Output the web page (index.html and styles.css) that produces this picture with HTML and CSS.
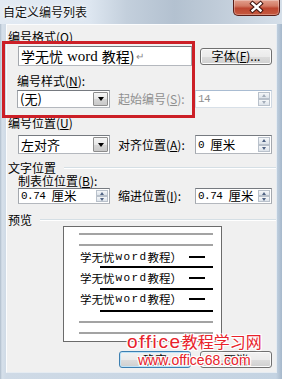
FILE: index.html
```html
<!DOCTYPE html>
<html lang="zh-CN">
	<head>
		<meta charset="utf-8">
		<link rel="stylesheet" href="styles.css">
	</head>

	<body>
		<div class="window">
			<div class="titlebar">
				<span class="title">自定义编号列表</span>
				<div class="close">
					<svg width="45" height="15" viewBox="0 0 45 15">
						<path d="M18.5 3.5 L26.5 10.5 M26.5 3.5 L18.5 10.5" stroke="#3b110c" stroke-width="4.4" stroke-linecap="square" fill="none"/>
						<path d="M18.5 3.5 L26.5 10.5 M26.5 3.5 L18.5 10.5" stroke="#fff" stroke-width="2.4" stroke-linecap="square" fill="none"/>
					</svg>
				</div>
			</div>

			<div class="client">
				<div class="lbl l-fmt">编号格式(<u>O</u>)</div>
				<div class="row row-fmt">
					<div class="box fmt">学无忧<span class="serif">word</span>教程)<span class="ret">↵</span></div>
					<div class="btn btn-font">字体(<u>F</u>)...</div>
				</div>

				<div class="lbl l-style">编号样式(<u>N</u>):</div>
				<div class="row row-style">
					<div class="box combo c-style">(无)<span class="drop"></span></div>
					<span class="lbl side dim">起始编号(<u>S</u>):</span>
					<div class="box spin disabled"><span class="num">14</span><span class="arrows"><i class="up"></i><i class="down"></i></span></div>
				</div>

				<div class="lbl l-pos">编号位置(<u>U</u>)</div>
				<div class="row row-pos">
					<div class="box combo c-pos">左对齐<span class="drop"></span></div>
					<span class="lbl side">对齐位置(<u>A</u>):</span>
					<div class="box spin"><span class="num">0 </span>厘米<span class="arrows"><i class="up"></i><i class="down"></i></span></div>
				</div>

				<div class="lbl sep l-text">文字位置</div>
				<div class="lbl l-tab">制表位位置(<u>B</u>):</div>
				<div class="row row-text">
					<div class="box spin s-tab"><span class="num">0.74 </span>厘米<span class="arrows"><i class="up"></i><i class="down"></i></span></div>
					<span class="lbl side">缩进位置(<u>I</u>):</span>
					<div class="box spin"><span class="num">0.74 </span>厘米<span class="arrows"><i class="up"></i><i class="down"></i></span></div>
				</div>

				<div class="lbl sep l-prev">预览</div>
				<div class="preview">
					<div class="pv-gray g1"></div>
					<div class="pv-gray g2"></div>
					<div class="pv-text t1">学无忧<span class="mono">word</span>教程）<span class="dash"></span></div>
					<div class="pv-black b1"></div>
					<div class="pv-text t2">学无忧<span class="mono">word</span>教程）<span class="dash"></span></div>
					<div class="pv-black b2"></div>
					<div class="pv-text t3">学无忧<span class="mono">word</span>教程）<span class="dash"></span></div>
					<div class="pv-black b3"></div>
					<div class="pv-gray g3"></div>
					<div class="pv-gray g4"></div>
				</div>

				<div class="buttons">
					<div class="btn btn-ok">确定</div>
					<div class="btn btn-cancel">取消</div>
				</div>
			</div>

			<!-- red annotation frame drawn over the dialog -->
			<div class="highlight"></div>

			<div class="watermark">
				<div class="wm1"><span class="lat">office</span>教程学习网</div>
				<div class="wm2">www.office68.com</div>
			</div>
		</div>
	</body>
</html>
```

FILE: styles.css
```css
* {
	box-sizing: border-box;
}
html, body {
	margin: 0;
}
body {
	width: 282px;
	height: 379px;
	overflow: hidden;
	font-family: "Noto Sans CJK SC", sans-serif;
	font-size: 12px;
	line-height: 12px;
	color: #000;
	background: #c9d7e6;
}
.window {
	position: relative;
	width: 282px;
	height: 379px;
	background: linear-gradient(90deg, #aebccb 0, #d6e0ea 2px, #cfdae6 6px, #c4d3e2 276px, #a6b8cb 282px);
}
.titlebar {
	height: 24px;
	display: flex;
	align-items: flex-start;
	background: linear-gradient(90deg, #e2eaf3 0%, #dde6f0 32%, #c3cfdc 45%, #b3c1d0 62%, #bfcbd8 76%, #d5dfe9 100%);
}
.title {
	padding: 6px 0 0 3px;
	color: #111;
	text-shadow: 0 0 6px #fff, 0 0 3px #fff;
}
.close {
	margin-left: auto;
	margin-right: 2px;
	width: 47px;
	height: 16px;
	border: 1px solid #5a1e18;
	border-top: none;
	border-radius: 0 0 5px 5px;
	background: linear-gradient(#e2a08e, #d27a64 40%, #bd4630 55%, #c65a40);
	box-shadow: inset 0 0 0 1px rgba(255, 255, 255, .3);
}
.close svg {
	display: block;
}
.client {
	margin: 0 5px 0 6px;
	height: 349px;
	background: #f0f0f0;
	border: 1px solid;
	border-color: #fbfcfd #e6ecf2 #e6ecf2 #fbfcfd;
}
.lbl {
	height: 12px;
	line-height: 12px;
	padding-left: 1px;
	white-space: nowrap;
}
.l-fmt {
	margin-top: 6px;
}
.l-style {
	margin-top: 9px;
	padding-left: 10px;
}
.l-pos {
	margin-top: 9px;
}
.l-text {
	margin-top: 8px;
}
.l-tab {
	margin-top: 1px;
	padding-left: 11px;
}
.l-prev {
	margin-top: 10px;
}
.sep {
	display: flex;
	align-items: center;
}
.sep::after {
	content: "";
	flex: 1;
	margin-left: 8px;
	border-top: 1px solid #d5dfe5;
	border-bottom: 1px solid #fff;
}
.row {
	display: flex;
	align-items: center;
}
.row-fmt {
	margin-top: 3px;
	height: 20px;
}
.row-style {
	margin-top: 3px;
	height: 18px;
}
.row-pos {
	margin-top: 6px;
	height: 19px;
}
.row-text {
	margin-top: 1px;
	height: 16px;
}
.box {
	height: 100%;
	display: flex;
	align-items: center;
	background: #fff;
	border: 1px solid;
	border-color: #767a80 #a4a8ae #b4b8be #a4a8ae;
	white-space: nowrap;
}
.fmt {
	margin-left: 11px;
	width: 174px;
	padding-left: 2px;
	font-size: 14px;
}
.serif {
	font-family: "Liberation Serif", serif;
	font-size: 15px;
	margin: 0 4px;
}
.ret {
	font-size: 10px;
	color: #8a8a8a;
	margin-left: 1px;
}
.combo {
	padding-left: 2px;
	font-size: 13px;
}
.c-style {
	margin-left: 10px;
	width: 93px;
}
.c-pos {
	margin-left: 11px;
	width: 92px;
}
.drop {
	align-self: stretch;
	width: 15px;
	margin: 1px 1px 1px auto;
	border: 1px solid #8d8d8d;
	border-radius: 1px;
	background: linear-gradient(#f6f6f6, #e6e6e6 50%, #d6d6d6 51%, #c9c9c9);
	display: flex;
	align-items: center;
	justify-content: center;
}
.drop::before {
	content: "";
	border-left: 3.5px solid transparent;
	border-right: 3.5px solid transparent;
	border-top: 4px solid #000;
}
.side {
	width: 85px;
	padding-left: 8px;
}
.dim {
	color: #8f8f8f;
}
.spin {
	width: 77px;
	padding-left: 2px;
	font-size: 12.5px;
}
.s-tab {
	margin-left: 11px;
	width: 92px;
}
.num {
	font-family: "Liberation Mono", monospace;
	font-size: 11px;
	letter-spacing: -0.5px;
	white-space: pre;
}
.disabled {
	border-color: #a9bcd2 #cfd8e2 #d8e0e8 #cfd8e2;
	color: #8f8f8f;
}
.arrows {
	align-self: stretch;
	width: 12px;
	margin: 1px 1px 1px auto;
	display: flex;
	flex-direction: column;
}
.arrows i {
	flex: 1;
	display: flex;
	align-items: center;
	justify-content: center;
	border: 1px solid #b9c1cb;
	background: linear-gradient(#f5f7f9, #dde3ea);
}
.arrows .up::before {
	content: "";
	border-left: 2.5px solid transparent;
	border-right: 2.5px solid transparent;
	border-bottom: 3px solid #4f6283;
}
.arrows .down::before {
	content: "";
	border-left: 2.5px solid transparent;
	border-right: 2.5px solid transparent;
	border-top: 3px solid #4f6283;
}
.disabled .arrows .up::before {
	border-bottom-color: #a3adba;
}
.disabled .arrows .down::before {
	border-top-color: #a3adba;
}
.btn {
	height: 17px;
	display: flex;
	align-items: center;
	justify-content: center;
	border: 1px solid #707070;
	border-radius: 3px;
	background: linear-gradient(#f2f2f2, #ebebeb 50%, #dddddd 51%, #cfcfcf);
	box-shadow: inset 0 0 0 1px #fbfbfb;
	white-space: nowrap;
}
.btn-font {
	margin-left: 8px;
	width: 72px;
}
.preview {
	margin-left: 56px;
	width: 159px;
	height: 116px;
	padding-left: 15px;
	background: #fff;
	border: 1px solid #6b6b6b;
}
.pv-gray {
	width: 134px;
	height: 2px;
	background: #a3a3a3;
}
.pv-black {
	margin-left: 21px;
	width: 113px;
	height: 2px;
	background: #000;
}
.pv-text {
	height: 12px;
	display: flex;
	align-items: center;
	margin-left: 1px;
	font-size: 11.5px;
	white-space: nowrap;
}
.mono {
	font-family: "Liberation Mono", monospace;
	font-size: 11px;
	letter-spacing: 1.4px;
	margin-left: 1px;
}
.dash {
	width: 16px;
	height: 2px;
	margin-left: 7px;
	background: #000;
}
.g1 { margin-top: 6px; }
.g2 { margin-top: 9px; }
.t1 { margin-top: 5px; }
.b1 { margin-top: 3px; }
.t2 { margin-top: 4px; }
.b2 { margin-top: 4px; }
.t3 { margin-top: 3px; }
.b3 { margin-top: 5px; }
.g3 { margin-top: 9px; }
.g4 { margin-top: 9px; }
.buttons {
	margin-top: 9px;
	display: flex;
}
.btn-ok {
	margin-left: 112px;
	width: 72px;
	border-color: #3c7fb1;
	box-shadow: inset 0 0 0 1px #bfe3f7;
}
.btn-cancel {
	margin-left: 9px;
	width: 72px;
}
.highlight {
	position: absolute;
	left: 2px;
	top: 41px;
	width: 193px;
	height: 77px;
	border: 3px solid #cc1f27;
}
.watermark {
	position: absolute;
	left: 127px;
	top: 331px;
	color: #e8222b;
	text-shadow: 1px 1px 0 #fff, -1px -1px 0 #fff, 1px -1px 0 #fff, -1px 1px 0 #fff, 0 0 3px #fff;
	white-space: nowrap;
}
.wm1 {
	height: 21px;
	font-size: 16px;
	line-height: 21px;
}
.wm1 .lat {
	font-family: "Liberation Sans", sans-serif;
	font-size: 19px;
	letter-spacing: 1.6px;
}
.wm2 {
	margin-left: 11px;
	font-family: "Liberation Sans", sans-serif;
	font-size: 14px;
	line-height: 16px;
}
```
